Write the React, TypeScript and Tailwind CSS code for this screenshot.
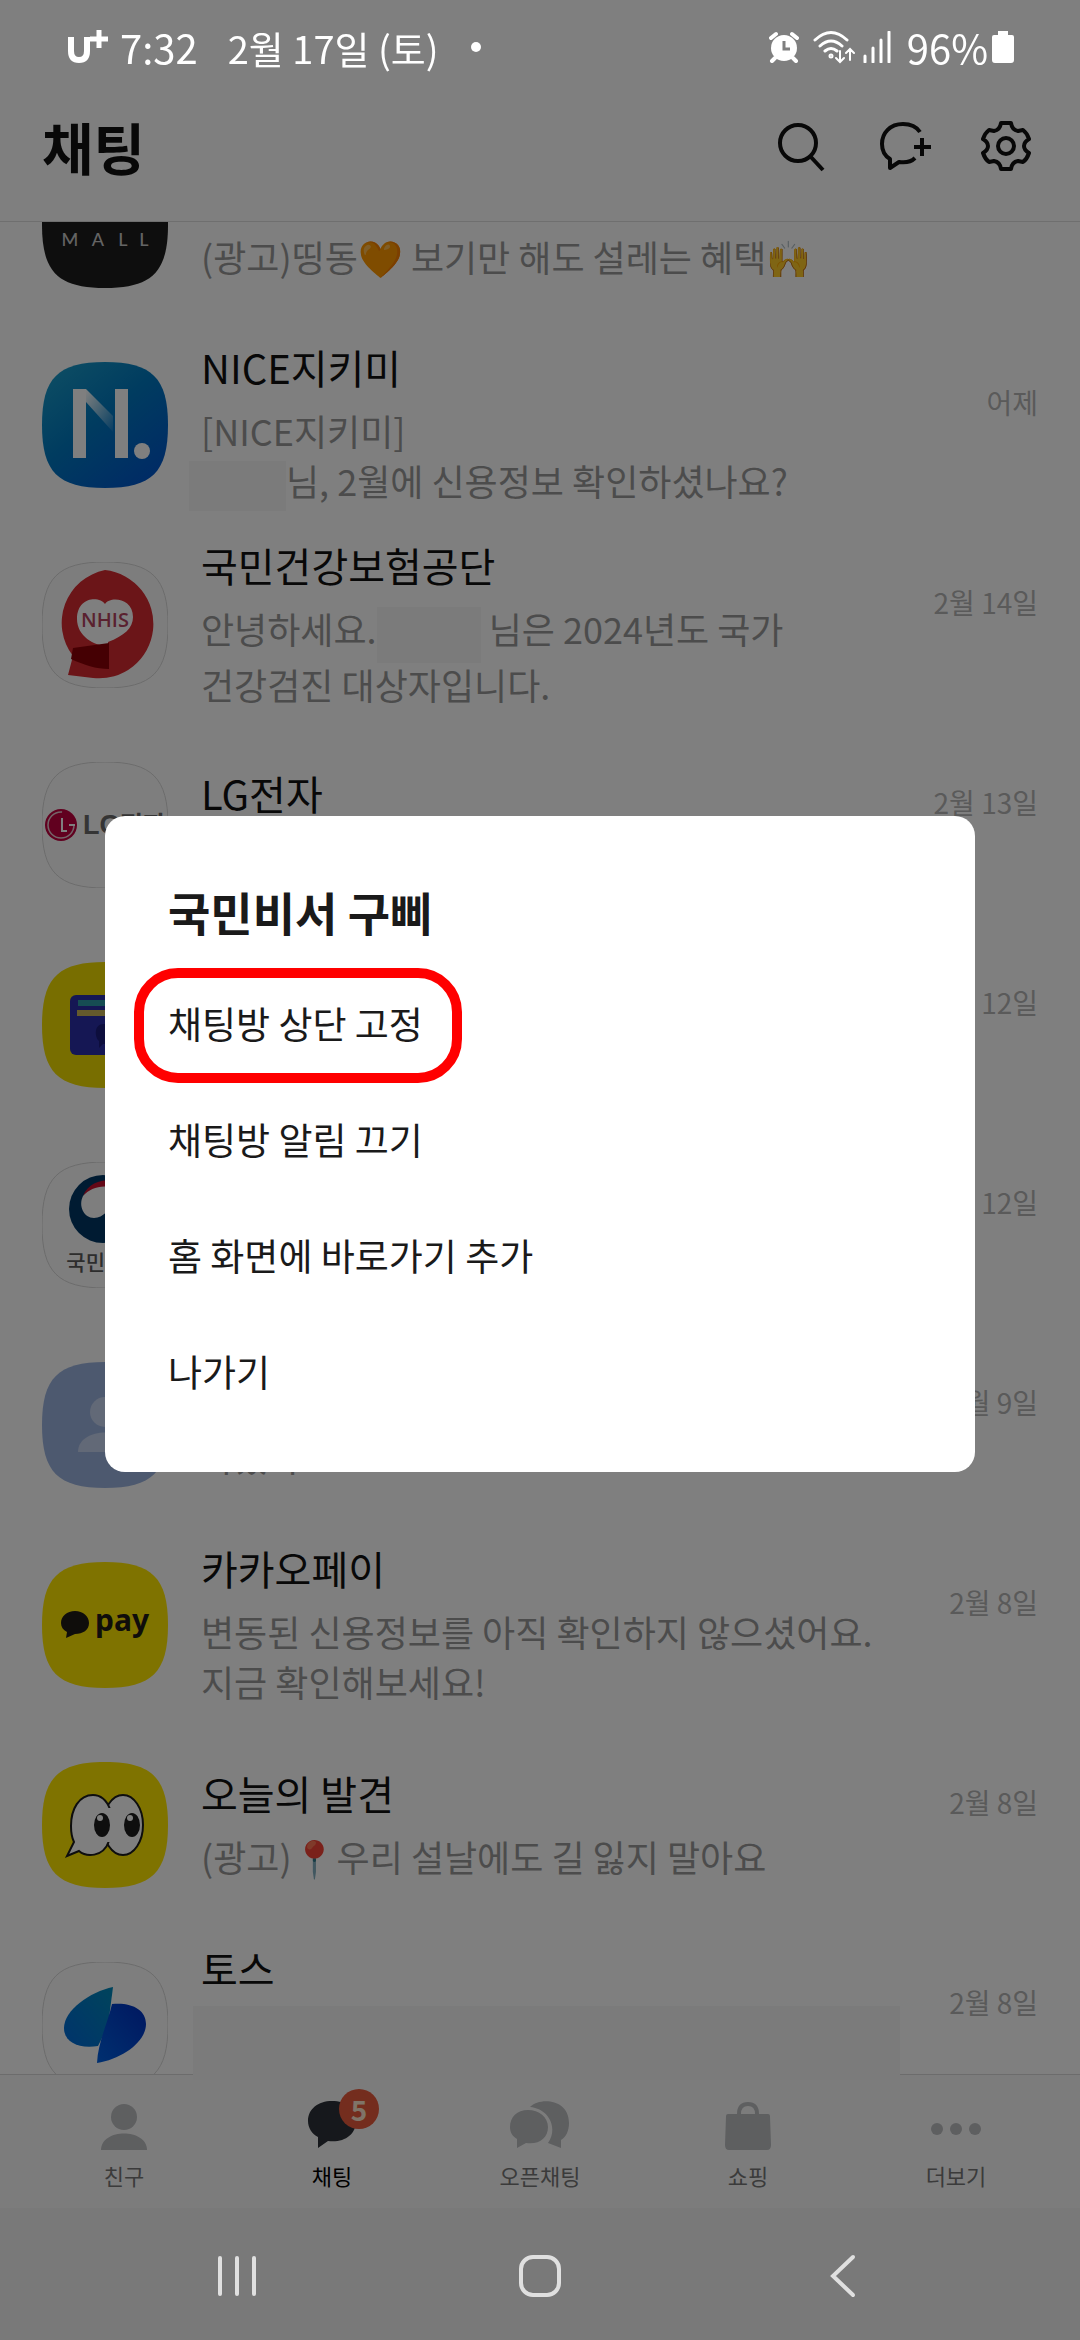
import type { ReactNode } from 'react';

const SQUIRCLE = 'M63 0C110 0 126 16 126 63C126 110 110 126 63 126C16 126 0 110 0 63C0 16 16 0 63 0Z';

type Chat = {
    id: string;
    name?: string;
    date?: string;
    preview?: ReactNode;
    logo: ReactNode;
    fill: string;
    outlined?: boolean;
};

function Hidden({ className }: { className: string }) {
    return <span className={`bg-[#f6f6f6] ${className}`} aria-hidden="true" />;
}

function Avatar({ fill, outlined, children }: { fill: string; outlined?: boolean; children: ReactNode }) {
    return (
        <svg viewBox="0 0 126 126" className="size-[126px] shrink-0" aria-hidden="true">
            <path d={SQUIRCLE} fill={fill} stroke={outlined ? '#d8d8d8' : 'none'} strokeWidth="1" />
            {children}
        </svg>
    );
}

const chats: Chat[] = [
    {
        id: 'mall',
        preview: <>(광고)띵동🧡 보기만 해도 설레는 혜택🙌</>,
        fill: '#1c1c1c',
        logo: (
            <g fill="#c8c8c8" fontFamily="Lato" fontSize="18" fontWeight="500" textAnchor="middle">
                <text x="28" y="84">M</text>
                <text x="56" y="84">A</text>
                <text x="81" y="84">L</text>
                <text x="102" y="84">L</text>
            </g>
        ),
    },
    {
        id: 'nice',
        name: 'NICE지키미',
        date: '어제',
        preview: (
            <>
                [NICE지키미]
                <br />
                <Hidden className="-my-1 -ml-[12px] inline-block h-[50px] w-[97px] align-middle" />
                님, 2월에 신용정보 확인하셨나요?
            </>
        ),
        fill: 'url(#niceBg)',
        logo: (
            <>
                <defs>
                    <linearGradient id="niceBg" x1="0.1" y1="0" x2="0.9" y2="1">
                        <stop offset="0" stopColor="#1b9cc8" />
                        <stop offset="0.45" stopColor="#0078c0" />
                        <stop offset="1" stopColor="#0052cc" />
                    </linearGradient>
                    <linearGradient id="niceFold" x1="0" y1="0" x2="1" y2="1">
                        <stop offset="0" stopColor="#fff" />
                        <stop offset="1" stopColor="#fff" stopOpacity="0.05" />
                    </linearGradient>
                </defs>
                <path d="M44 27L71 54V70L44 40Z" fill="url(#niceFold)" />
                <path d="M31 27H44V96H31ZM73 27H86V96H73Z" fill="#fff" />
                <circle cx="100" cy="89" r="8" fill="#fff" />
            </>
        ),
    },
    {
        id: 'nhis',
        name: '국민건강보험공단',
        date: '2월 14일',
        preview: (
            <>
                안녕하세요.
                <Hidden className="-my-1 inline-block h-[56px] w-[104px] align-middle" /> 님은 2024년도 국가
                <br />
                건강검진 대상자입니다.
            </>
        ),
        fill: '#fbfbfb',
        outlined: true,
        logo: (
            <>
                <path d="M63 8A54 54 0 1 1 51 116L26 113L31 94A54 54 0 0 1 63 8Z" fill="#d62a30" />
                <path d="M63 42C58 34 35 34 35 57C35 74 52 84 66 84V80C82 74 91 66 91 55C91 36 68 34 63 42Z" fill="#fff" />
                <path d="M31 86L67 81V107C54 107 42 103 29 97Z" fill="#8a0006" />
                <text x="63" y="65" fill="#b4435e" fontFamily="Open Sans" fontSize="20" fontWeight="600" textAnchor="middle">NHIS</text>
            </>
        ),
    },
    {
        id: 'lg',
        name: 'LG전자',
        date: '2월 13일',
        fill: '#fdfdfd',
        outlined: true,
        logo: (
            <>
                <circle cx="19" cy="63" r="16" fill="#c2003f" />
                <circle cx="19" cy="63" r="13" fill="none" stroke="#e8c8d0" strokeWidth="1.5" strokeDasharray="62 20" />
                <path d="M20 56V69H25M27 63H33" fill="none" stroke="#fff" strokeWidth="2" />
                <text x="41" y="72" fill="#6a6a6a" fontFamily="Liberation Sans, Noto Sans CJK KR" fontSize="27" fontWeight="700">LG</text>
                <text x="78" y="72" fill="#6a6a6a" fontFamily="Noto Sans CJK KR" fontSize="25" fontWeight="700">전자</text>
            </>
        ),
    },
    {
        id: 'wallet',
        date: '2월 12일',
        fill: '#f0dc00',
        logo: (
            <>
                <rect x="28" y="33" width="76" height="60" rx="6" fill="#2a2fa8" />
                <rect x="36" y="38" width="60" height="6" fill="#2c9aa6" />
                <rect x="35" y="48" width="60" height="6" fill="#c9b458" />
                <path d="M62 62C70 62 76 66 76 72C76 80 66 82 61 82L57 86V79C53 76 51 62 62 62Z" fill="#1a1c7a" />
            </>
        ),
    },
    {
        id: 'gov',
        date: '2월 12일',
        fill: '#fcfcfc',
        outlined: true,
        logo: (
            <>
                <circle cx="61" cy="47" r="34" fill="#003764" />
                <path d="M41 34C46 22 56 18 70 18V26C56 24 47 28 41 34Z" fill="#c8102e" />
                <path d="M41 34C48 26 60 22 72 26V46C66 46 62 56 52 56C42 56 36 44 41 34Z" fill="#fcfcfc" />
                <text x="63" y="108" fill="#5a5a5a" fontFamily="Noto Sans CJK KR" fontSize="21" fontWeight="500" textAnchor="middle">국민비서</text>
            </>
        ),
    },
    {
        id: 'left',
        date: '2월 9일',
        preview: <>하겠다</>,
        fill: '#9bb3de',
        logo: (
            <>
                <circle cx="63" cy="50" r="15" fill="#c4d2ee" />
                <path d="M36 90C36 64 90 64 90 90Z" fill="#c4d2ee" />
            </>
        ),
    },
    {
        id: 'kakaopay',
        name: '카카오페이',
        date: '2월 8일',
        preview: (
            <>
                변동된 신용정보를 아직 확인하지 않으셨어요.
                <br />
                지금 확인해보세요!
            </>
        ),
        fill: '#ffe600',
        logo: (
            <>
                <path d="M33 49C41 49 47 54 47 61C47 68 41 72 33 72L24 76L25 70C21 68 19 65 19 61C19 54 25 49 33 49Z" fill="#1f1a17" />
                <text x="53" y="69" fill="#1f1a17" fontFamily="Noto Sans" fontSize="30" fontWeight="700">pay</text>
            </>
        ),
    },
    {
        id: 'today',
        name: '오늘의 발견',
        date: '2월 8일',
        preview: <>(광고)📍우리 설날에도 길 잃지 말아요</>,
        fill: '#ffe600',
        logo: (
            <>
                <g fill="#fff" stroke="#1c1c1c" strokeWidth="2">
                    <ellipse cx="81" cy="63" rx="20" ry="30" />
                    <path d="M68 47C64 37 58 33 51 33C37 33 29 47 29 64C29 71 30 76 32 80L25 94L37 89C44 95 61 96 67 79" />
                </g>
                <path d="M61 46H70V80H61Z" fill="#fff" />
                <ellipse cx="60" cy="63" rx="8" ry="12" fill="#1c1c1c" />
                <ellipse cx="90" cy="63" rx="8" ry="12" fill="#1c1c1c" />
                <circle cx="58" cy="56" r="3" fill="#fff" />
                <circle cx="88" cy="56" r="3" fill="#fff" />
            </>
        ),
    },
    {
        id: 'toss',
        name: '토스',
        date: '2월 8일',
        preview: <Hidden className="-ml-2 block h-[100px] w-[707px]" />,
        fill: '#fcfcfc',
        outlined: true,
        logo: (
            <>
                <defs>
                    <linearGradient id="tossA" x1="0" y1="1" x2="1" y2="0">
                        <stop offset="0" stopColor="#0068d8" />
                        <stop offset="1" stopColor="#0088b8" />
                    </linearGradient>
                    <linearGradient id="tossB" x1="0" y1="1" x2="1" y2="0">
                        <stop offset="0" stopColor="#0060e0" />
                        <stop offset="1" stopColor="#002fc0" />
                    </linearGradient>
                </defs>
                <path d="M71 25C48 30 22 48 22 66C22 80 36 87 56 84L66 64Z" fill="url(#tossA)" />
                <path d="M70 42C90 40 104 48 104 62C104 80 80 97 55 101C56 80 66 60 70 42Z" fill="url(#tossB)" />
            </>
        ),
    },
];

const menuItems = ['채팅방 상단 고정', '채팅방 알림 끄기', '홈 화면에 바로가기 추가', '나가기'];

function StatusBar() {
    return (
        <div className="relative z-20 flex h-[94px] items-center justify-between px-[66px] text-white">
            <div className="flex items-center">
                <svg viewBox="0 0 44 36" className="mr-[10px] h-[36px] w-[44px]" fill="none" stroke="#fff" aria-label="U+">
                    <path d="M5 8V22Q5 31 13 31Q21 31 21 22V8" strokeWidth="6" />
                    <path d="M33 1V19M24 10H42" strokeWidth="5" />
                </svg>
                <span className="mr-[30px] text-[40px]">7:32</span>
                <span className="mr-8 text-[38px]">2월 17일 (토)</span>
                <span className="size-[10px] rounded-full bg-white" />
            </div>
            <div className="flex items-center">
                <svg viewBox="0 0 30 32" className="mr-[14px] h-[32px] w-[30px]" aria-hidden="true">
                    <circle cx="15" cy="17" r="13" fill="#fff" />
                    <path d="M2 7L7 3M28 7L23 3M6 27L3 30M24 27L27 30" stroke="#fff" strokeWidth="4" strokeLinecap="round" />
                    <path d="M15 10V18H21" fill="none" stroke="#7f7f7f" strokeWidth="3" />
                </svg>
                <svg viewBox="0 0 42 34" className="mr-2 h-[34px] w-[42px]" fill="none" stroke="#fff" strokeWidth="3" strokeLinecap="round" aria-hidden="true">
                    <path d="M2 10Q18 -5 34 10M7 16Q18 6 29 16M12 21Q18 16 24 21" />
                    <circle cx="18" cy="26" r="1" />
                    <path d="M27 21V31M23 28L27 32L31 28M37 30V20M33 23L37 19L41 23" strokeWidth="2" />
                </svg>
                <svg viewBox="0 0 28 32" className="mr-4 h-[32px] w-[28px]" stroke="#fff" strokeWidth="3" aria-hidden="true">
                    <path d="M2 31V25M10 31V17M18 31V9M26 31V1" strokeLinecap="round" />
                </svg>
                <span className="text-[40px]">96%</span>
                <svg viewBox="0 0 22 32" className="ml-1 h-[32px] w-[22px]" fill="#fff" aria-hidden="true">
                    <path d="M6 0H16V4H20Q22 4 22 6V29Q22 32 19 32H3Q0 32 0 29V6Q0 4 2 4H6Z" />
                </svg>
            </div>
        </div>
    );
}

function Header() {
    return (
        <header className="flex h-[128px] items-center justify-between border-b border-[#dedede] pr-[48px] pb-6 pl-[42px]">
            <h1 className="text-[56px] leading-[76px] font-bold">채팅</h1>
            <div className="flex items-center gap-[48px]">
                <button type="button" aria-label="검색" className="mr-1">
                    <svg viewBox="0 0 52 52" className="size-[52px]" fill="none" stroke="#111" strokeWidth="4">
                        <circle cx="24" cy="23" r="18" />
                        <path d="M36 36L49 50" />
                    </svg>
                </button>
                <button type="button" aria-label="새 채팅">
                    <svg viewBox="0 0 54 52" className="h-[52px] w-[54px]" fill="none" stroke="#111" strokeWidth="4">
                        <path d="M42 12C38 6 32 4 25 4C12 4 4 13 4 24C4 31 7 36 12 39V48L21 42C28 43 33 42 37 38" strokeLinejoin="round" />
                        <path d="M44 18V36M36 27H53" />
                    </svg>
                </button>
                <button type="button" aria-label="설정">
                    <svg viewBox="0 0 52 52" className="size-[52px]" fill="none" stroke="#111" strokeWidth="4" strokeLinejoin="round">
                        <path d="M21 3H31Q32 10 38 11L43 10Q47 13 49 19Q44 22 44 26Q44 30 49 33Q47 39 43 42L38 41Q32 42 31 49H21Q20 42 14 41L9 42Q5 39 3 33Q8 30 8 26Q8 22 3 19Q5 13 9 10L14 11Q20 10 21 3Z" />
                        <circle cx="26" cy="26" r="8" />
                    </svg>
                </button>
            </div>
        </header>
    );
}

function ChatRow({ chat }: { chat: Chat }) {
    return (
        <li className="flex h-[200px] items-center px-[42px]">
            <Avatar fill={chat.fill} outlined={chat.outlined}>{chat.logo}</Avatar>
            <div className="ml-[33px] min-w-0 flex-1 pb-[6px]">
                <p className="mb-2 min-h-[60px] text-[40px] leading-[60px] text-[#111]">{chat.name}</p>
                <div className="min-h-[50px] text-[36px] leading-[50px] whitespace-nowrap text-[#999]">{chat.preview}</div>
            </div>
            {chat.date && <time className="mb-[46px] ml-2 text-[28px] leading-10 text-[#b4b4b4]">{chat.date}</time>}
        </li>
    );
}

function Tab({ label, active, children }: { label: string; active?: boolean; children: ReactNode }) {
    return (
        <button type="button" className="flex flex-1 flex-col items-center gap-1">
            <span className="relative">{children}</span>
            <span className={active ? 'text-[22px] text-black' : 'text-[22px] text-[#777]'}>{label}</span>
        </button>
    );
}

function TabBar() {
    return (
        <nav className="relative flex h-[134px] border-t border-[#d8d8d8] bg-[#f9f9f9] px-[20px] pt-6">
            <Hidden className="absolute -top-px left-[193px] h-[6px] w-[707px]" />
            <Tab label="친구">
                <svg viewBox="0 0 56 56" className="size-[56px]" fill="#bcbec1">
                    <circle cx="28" cy="18" r="13" />
                    <path d="M5 51C5 29 51 29 51 51Z" />
                </svg>
            </Tab>
            <Tab label="채팅" active>
                <svg viewBox="0 0 56 56" className="size-[56px]" fill="#2c3138">
                    <path d="M28 2C42 2 52 10 52 22C52 36 40 44 24 42L14 49V38C8 35 4 29 4 22C4 10 14 2 28 2Z" />
                </svg>
                <span className="absolute -top-[10px] left-[35px] flex size-[40px] items-center justify-center rounded-full bg-[#e85a3c] text-[28px] leading-none font-bold text-[#ffe8d0]">5</span>
            </Tab>
            <Tab label="오픈채팅">
                <svg viewBox="0 0 64 56" className="h-[56px] w-[64px]" fill="#bcbec1">
                    <path d="M22 8C32 -2 61 0 61 24C61 32 58 38 53 41V49L40 44C50 30 42 10 22 8Z" />
                    <path d="M20 11C31 11 40 18 40 28C40 39 31 46 18 44L9 49V40C4 37 2 33 2 28C2 18 9 11 20 11Z" />
                </svg>
            </Tab>
            <Tab label="쇼핑">
                <svg viewBox="0 0 56 56" className="size-[56px]" fill="#bcbec1">
                    <path d="M8 15H48Q50 15 50 17L51 46Q51 51 47 51H9Q5 51 5 46L6 17Q6 15 8 15Z" />
                    <path d="M19 15Q19 5 28 5Q37 5 37 15" fill="none" stroke="#bcbec1" strokeWidth="4" />
                </svg>
            </Tab>
            <Tab label="더보기">
                <svg viewBox="0 0 56 56" className="size-[56px]" fill="#bcbec1">
                    <circle cx="9" cy="30" r="6" />
                    <circle cx="28" cy="30" r="6" />
                    <circle cx="47" cy="30" r="6" />
                </svg>
            </Tab>
        </nav>
    );
}

function SystemNav() {
    return (
        <div className="h-[132px] bg-[#f3f3f3]">
            <div className="relative z-20 flex h-full items-center justify-around px-[86px] pt-[3px]">
                <button type="button" aria-label="최근 앱">
                    <svg viewBox="0 0 44 44" className="size-[44px]" stroke="#e0e0e0" strokeWidth="4" strokeLinecap="round">
                        <path d="M5 4V40M22 4V40M39 4V40" />
                    </svg>
                </button>
                <button type="button" aria-label="홈">
                    <svg viewBox="0 0 44 44" className="size-[44px]" fill="none" stroke="#e0e0e0" strokeWidth="4">
                        <rect x="3" y="3" width="38" height="38" rx="12" />
                    </svg>
                </button>
                <button type="button" aria-label="뒤로">
                    <svg viewBox="0 0 44 44" className="size-[44px]" fill="none" stroke="#e0e0e0" strokeWidth="4" strokeLinecap="round">
                        <path d="M32 3L12 22L32 41" />
                    </svg>
                </button>
            </div>
        </div>
    );
}

function ChatMenu() {
    return (
        <div className="fixed inset-0 z-10 flex items-center justify-center bg-black/50 px-[105px] pb-[53px]">
            <div role="dialog" aria-labelledby="menu-title" className="w-full rounded-[20px] bg-white px-[63px] pt-[60px] pb-[42px]">
                <h2 id="menu-title" className="mb-5 text-[46px] leading-[70px] font-bold text-[#1a1a1a]">국민비서 구삐</h2>
                {menuItems.map((item, i) => (
                    <div key={item} className="relative">
                        <button type="button" className="block h-[116px] w-full text-left text-[37px] text-[#1a1a1a]">{item}</button>
                        {i === 0 && (
                            <span className="pointer-events-none absolute top-[2px] -left-[34px] h-[115px] w-[328px] rounded-[44px] border-[10px] border-[#ff0000]" />
                        )}
                    </div>
                ))}
            </div>
        </div>
    );
}

export default function App() {
    return (
        <div className="flex h-screen flex-col overflow-hidden bg-white font-['Noto_Sans_CJK_KR',sans-serif] text-[#111]">
            <StatusBar />
            <Header />
            <main className="min-h-0 flex-1 overflow-hidden">
                {/* list is scrolled part-way through the first chat */}
                <ul className="-mt-[97px]">
                    {chats.map((chat) => (
                        <ChatRow key={chat.id} chat={chat} />
                    ))}
                </ul>
            </main>
            <TabBar />
            <SystemNav />
            <ChatMenu />
        </div>
    );
}
